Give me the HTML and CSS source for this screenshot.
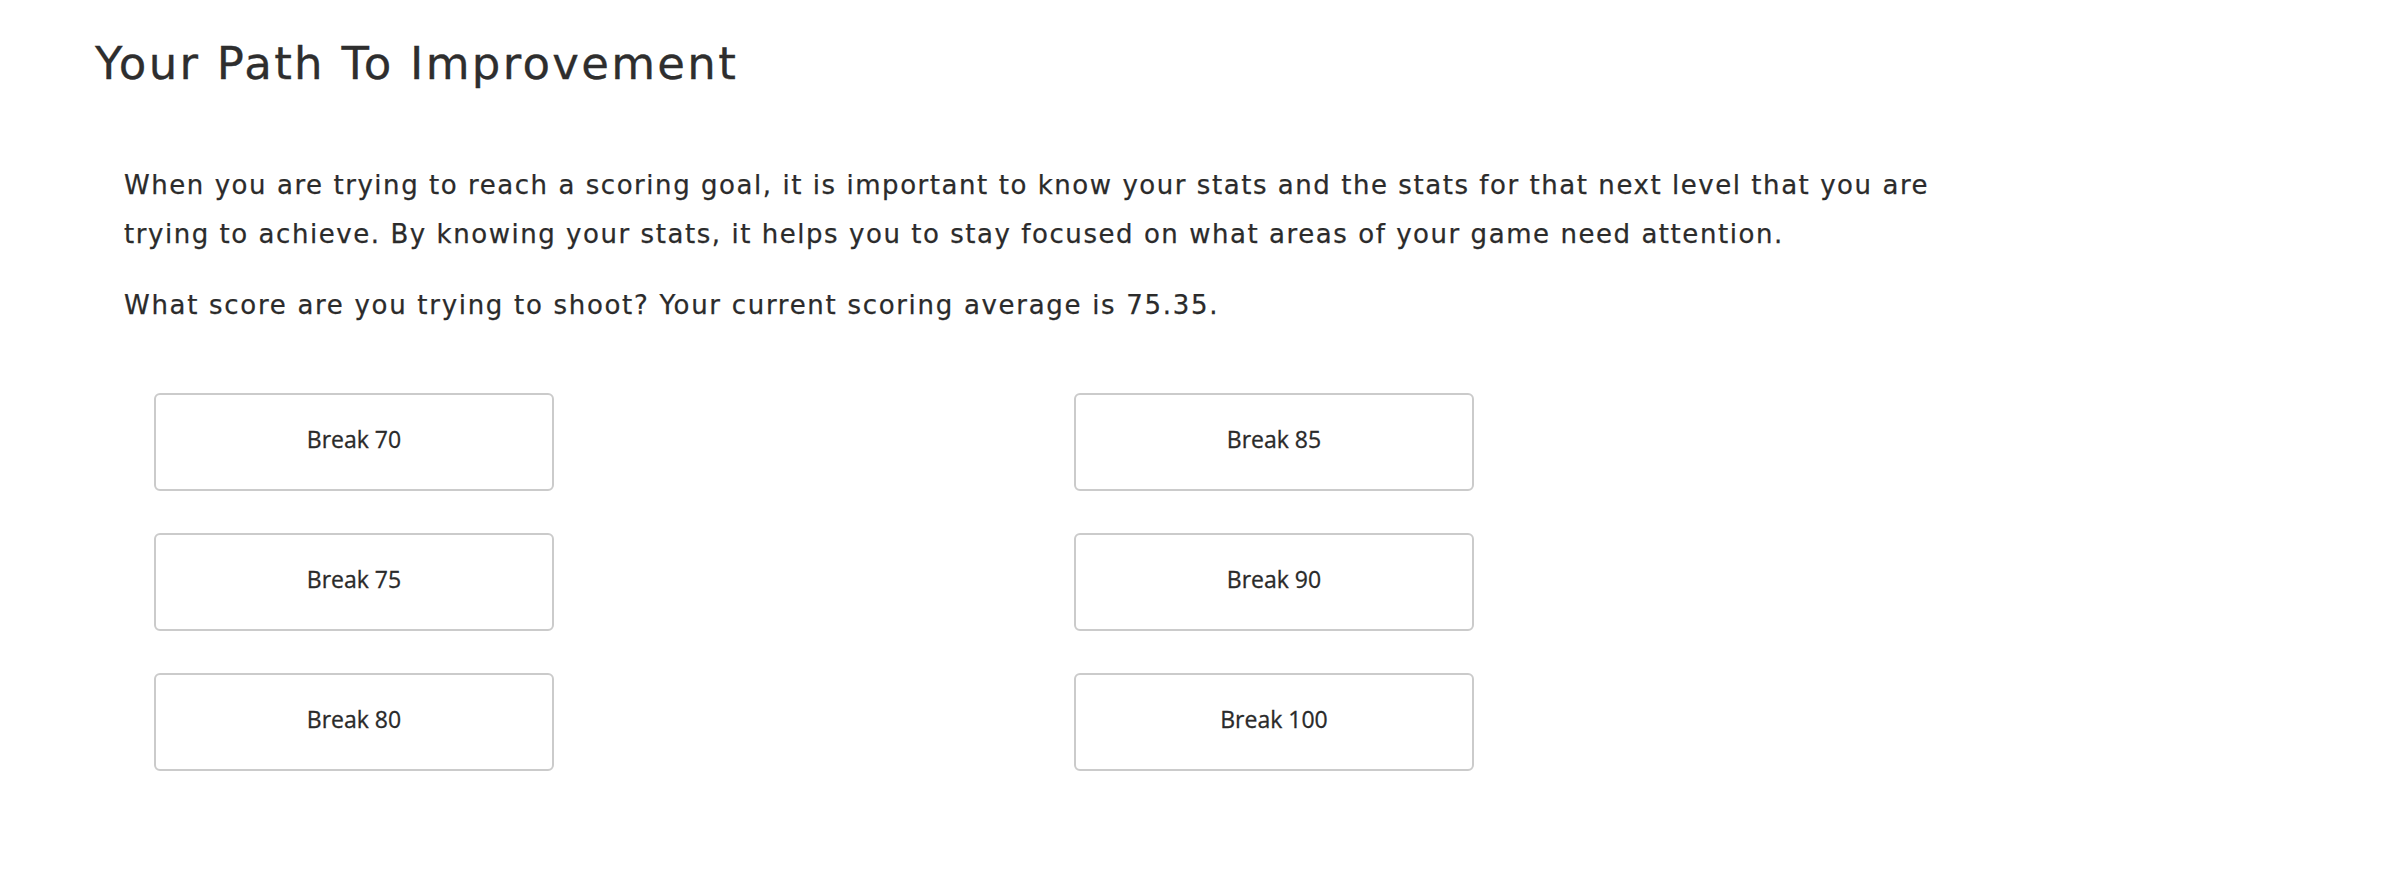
FILE: index.html
```html
<!DOCTYPE html>
<html lang="en">
<head>
<meta charset="utf-8">
<title>Your Path To Improvement</title>
<link rel="stylesheet" href="styles.css">
</head>
<body>
<main class="page">
  <h1 class="title">Your Path To Improvement</h1>
  <section class="content">
    <p class="lead">When you are trying to reach a scoring goal, it is important to know your stats and the stats for that next level that you are trying to achieve. By knowing your stats, it helps you to stay focused on what areas of your game need attention.</p>
    <p class="question">What score are you trying to shoot? Your current scoring average is 75.35.</p>
    <div class="choices">
      <div class="choice-col">
        <button class="choice" type="button">Break 70</button>
        <button class="choice" type="button">Break 75</button>
        <button class="choice" type="button">Break 80</button>
      </div>
      <div class="choice-col">
        <button class="choice" type="button">Break 85</button>
        <button class="choice" type="button">Break 90</button>
        <button class="choice" type="button">Break 100</button>
      </div>
    </div>
  </section>
</main>
</body>
</html>
```
FILE: styles.css
```css
html, body {
  margin: 0;
  padding: 0;
  background: #ffffff;
}

body {
  color: #2b2b2b;
  font-family: "DejaVu Sans", "Open Sans", sans-serif;
}

.page {
  padding: 37px 0 0 95px;
}

.title {
  margin: 0;
  font-size: 45px;
  line-height: 54px;
  font-weight: normal;
  letter-spacing: 2.3px;
  color: #2e2e2e;
  -webkit-text-stroke: 0.3px #2e2e2e;
}

.content {
  width: 1840px;
  padding: 70px 0 0 29px;
}

.lead,
.question {
  margin: 0;
  font-size: 26px;
  line-height: 49px;
  letter-spacing: 1.55px;
  -webkit-text-stroke: 0.25px #2b2b2b;
}

.question {
  margin-top: 22px;
  letter-spacing: 1.7px;
}

.choices {
  display: flex;
  margin-top: 63px;
}

.choice-col {
  width: 920px;
  padding-left: 30px;
  box-sizing: border-box;
  display: flex;
  flex-direction: column;
  gap: 42px;
}

.choice {
  width: 400px;
  height: 98px;
  box-sizing: border-box;
  border: 2px solid #cbcbcb;
  border-radius: 6px;
  background: #ffffff;
  color: #2a2a2a;
  font-family: "Open Sans", sans-serif;
  font-size: 23px;
  font-weight: 500;
  -webkit-text-stroke: 0.3px #2a2a2a;
  padding: 0 0 6px;
  cursor: pointer;
}
```
